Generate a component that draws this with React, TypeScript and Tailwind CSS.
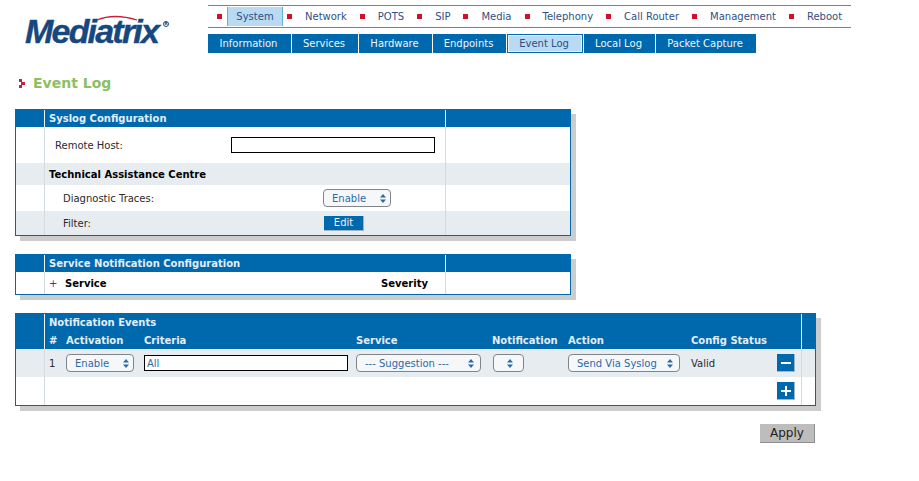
const topMenu = ["Network", "POTS", "SIP", "Media", "Telephony", "Call Router", "Management", "Reboot"];
const subMenu = [
  { label: "Information", width: "w-[83px]" },
  { label: "Services", width: "w-[66px]" },
  { label: "Hardware", width: "w-[73px]" },
  { label: "Endpoints", width: "w-[73px]" },
  { label: "Event Log", width: "w-[76px]" },
  { label: "Local Log", width: "w-[71px]" },
  { label: "Packet Capture", width: "w-[100px]" },
];

const Arrows = () => (
  <svg width="6" height="9" viewBox="0 0 6 9" className="shrink-0">
    <path d="M3 0 L6 3.4 H0 Z M0 5.6 H6 L3 9 Z" fill="#2a6aa8" />
  </svg>
);

const Select = ({ label, className }: { label: string; className: string }) => (
  <div className={`flex h-[18px] items-center justify-between rounded-[4px] border border-[#7f858a] bg-[#f6f7f9] text-[#2a6aa8] ${className}`}>
    <span className="whitespace-nowrap pt-[2px]">{label}</span>
    <Arrows />
  </div>
);

const Row = ({ cols, className, children, right }: { cols: string; className: string; children?: React.ReactNode; right?: React.ReactNode }) => (
  <div className={`grid ${cols} ${className}`}>
    <div />
    <div className="flex items-center border-l border-[#d3dbe1]">{children}</div>
    <div className="flex items-center justify-center border-l border-[#d3dbe1]">{right}</div>
  </div>
);

const HeadRow = ({ cols, className, children }: { cols: string; className: string; children?: React.ReactNode }) => (
  <div className={`grid bg-[#0068ad] font-bold text-[#e4eef6] ${cols} ${className}`}>
    <div />
    <div className="border-l border-[#f0f5f9]">{children}</div>
    <div className="border-l border-[#f0f5f9]" />
  </div>
);

const Square = () => <span className="mr-[13px] h-[5px] w-[5px] shrink-0 bg-[#d0112b]" />;

const cols1 = "grid-cols-[28px_401px_125px]";
const cols3 = "grid-cols-[28px_757px_14px]";
const eventCols = "grid-cols-[17px_78px_212px_136px_76px_123px_86px]";

export default function App() {
  return (
    <div className="h-[481px] w-[919px] overflow-hidden bg-white font-['DejaVu_Sans','Liberation_Sans',sans-serif] text-[10px] leading-none text-[#2a2a2a]">
      <div className="flex h-[54px] pt-[5px]">
        <div className="relative w-[208px] pl-[25px] pt-[8px]">
          <span className="block font-['Liberation_Sans',sans-serif] text-[34px] font-bold italic leading-[36px] tracking-[-1.8px] text-[#17477f] [-webkit-text-stroke:0.4px_#17477f]">Mediatrix</span>
          <svg width="42" height="8" viewBox="0 0 42 8" className="absolute left-[96px] top-[9px]">
            <path d="M1 6 Q18 -1 41 6" fill="none" stroke="#c4203f" strokeWidth="1.3" />
          </svg>
          <span className="absolute left-[163px] top-[16px] flex h-[6px] w-[6px] items-center justify-center rounded-full border border-[#17477f] text-[4px] font-bold text-[#17477f]">R</span>
        </div>
        <div>
          <div className="flex h-[23px] w-[643px] items-center border-y border-[#2a9fc0] pl-[9px] text-[#2f4f85]">
            <Square />
            <span className="mr-[4px] -ml-[8px] flex h-[19px] w-[56px] shrink-0 items-center justify-center border-x border-[#5fb3d6] bg-[#b8daf3]">System</span>
            {topMenu.map((item) => (
              <span key={item} className="flex shrink-0 items-center">
                <Square />
                <span className="mr-[13px] whitespace-nowrap">{item}</span>
              </span>
            ))}
          </div>
          <div className="mt-[6px] flex h-[19px] gap-px">
            {subMenu.map((item) =>
              item.label === "Event Log" ? (
                <div key={item.label} className={`flex items-center justify-center border border-[#0068ad] bg-[#b8daf3] pr-[2px] text-[#2f4f85] outline outline-1 -outline-offset-2 outline-[#e6f2fa] ${item.width}`}>{item.label}</div>
              ) : (
                <div key={item.label} className={`flex items-center justify-center whitespace-nowrap bg-[#0068ad] pr-[2px] text-[#eef5fa] ${item.width}`}>{item.label}</div>
              ),
            )}
          </div>
        </div>
      </div>

      <div className="flex h-[55px] items-start pl-[19px] pt-[21px]">
        <svg width="6" height="9" viewBox="0 0 6 9" className="mt-[4px]">
          <path d="M0 0 H3 V3 H6 V6 H3 V9 H0 V6 H2 V3 H0 Z" fill="#c8203f" />
        </svg>
        <h1 className="ml-[8px] text-[14px] font-bold leading-[16px] text-[#8cc063]">Event Log</h1>
      </div>

      <div className="ml-[15px]">
        <div className="w-[556px] border border-[#0068ad] shadow-[5px_5px_0_#cccccc]">
          <HeadRow cols={cols1} className="h-[17px]">
            <div className="flex h-full items-center pl-[4px]">Syslog Configuration</div>
          </HeadRow>
          <Row cols={cols1} className="h-[36px] bg-white">
            <span className="ml-[10px] w-[176px] pt-[2px]">Remote Host:</span>
            <div className="h-[16px] w-[204px] border border-black bg-white" />
          </Row>
          <Row cols={cols1} className="h-[22px] bg-[#e7ecf0]">
            <span className="ml-[4px] pt-[2px] font-bold text-black">Technical Assistance Centre</span>
          </Row>
          <Row cols={cols1} className="h-[26px] bg-white">
            <span className="ml-[18px] w-[260px] pt-[2px]">Diagnostic Traces:</span>
            <Select label="Enable" className="w-[68px] pl-[8px] pr-[4px]" />
          </Row>
          <Row cols={cols1} className="h-[24px] bg-[#e7ecf0]">
            <span className="ml-[18px] w-[261px] pt-[2px]">Filter:</span>
            <button className="h-[15px] w-[40px] border-r border-b border-[#9fb4c4] bg-[#0068ad] pt-px text-[#eef5fa]">Edit</button>
          </Row>
        </div>

        <div className="mt-[18px] w-[556px] border border-[#0068ad] shadow-[5px_5px_0_#cccccc]">
          <HeadRow cols={cols1} className="h-[17px]">
            <div className="flex h-full items-center pl-[4px]">Service Notification Configuration</div>
          </HeadRow>
          <Row cols={cols1} className="h-[22px] bg-white">
            <span className="ml-[4px] w-[16px] pt-[2px] text-[#3a35b5]">+</span>
            <span className="w-[316px] pt-[2px] font-bold text-black">Service</span>
            <span className="pt-[2px] font-bold text-black">Severity</span>
          </Row>
        </div>

        <div className="mt-[18px] w-[801px] border border-[#0068ad] shadow-[5px_5px_0_#cccccc]">
          <HeadRow cols={cols3} className="h-[35px]">
            <div className="flex h-[17px] items-center pl-[4px]">Notification Events</div>
            <div className={`grid h-[18px] items-center pl-[4px] pt-[2px] ${eventCols}`}>
              <span>#</span>
              <span>Activation</span>
              <span>Criteria</span>
              <span>Service</span>
              <span>Notification</span>
              <span>Action</span>
              <span className="whitespace-nowrap">Config Status</span>
            </div>
          </HeadRow>
          <Row cols={cols3} className="h-[28px] bg-[#e7ecf0]">
            <div className={`grid flex-1 items-center pl-[4px] ${eventCols}`}>
              <span className="pt-[2px]">1</span>
              <Select label="Enable" className="w-[68px] pl-[8px] pr-[4px]" />
              <div className="flex h-[16px] w-[204px] items-center border border-black bg-white pl-[2px] pt-[2px] text-[#2a6aa8]">All</div>
              <Select label="--- Suggestion ---" className="w-[125px] pl-[8px] pr-[6px]" />
              <Select label="" className="ml-px w-[31px] pl-[8px] pr-[10px]" />
              <Select label="Send Via Syslog" className="w-[112px] pl-[8px] pr-[6px]" />
              <span className="pt-[2px]">Valid</span>
            </div>
            <button className="mr-[6px] flex h-[18px] w-[18px] shrink-0 items-center justify-center border-r border-b border-[#9fb4c4] bg-[#0068ad]">
              <span className="h-[2px] w-[10px] bg-white" />
            </button>
          </Row>
          <Row cols={cols3} className="h-[28px] bg-white">
            <button className="relative ml-auto mr-[6px] flex h-[18px] w-[18px] items-center justify-center border-r border-b border-[#9fb4c4] bg-[#0068ad]">
              <span className="h-[2px] w-[10px] bg-white" />
              <span className="absolute h-[10px] w-[2px] bg-white" />
            </button>
          </Row>
        </div>

        <div className="mt-[18px] flex w-[800px] justify-end">
          <button className="h-[19px] w-[55px] border-r border-b border-[#8d8d8d] bg-[#bdbdbd] text-[12px] text-[#222]">Apply</button>
        </div>
      </div>
    </div>
  );
}
